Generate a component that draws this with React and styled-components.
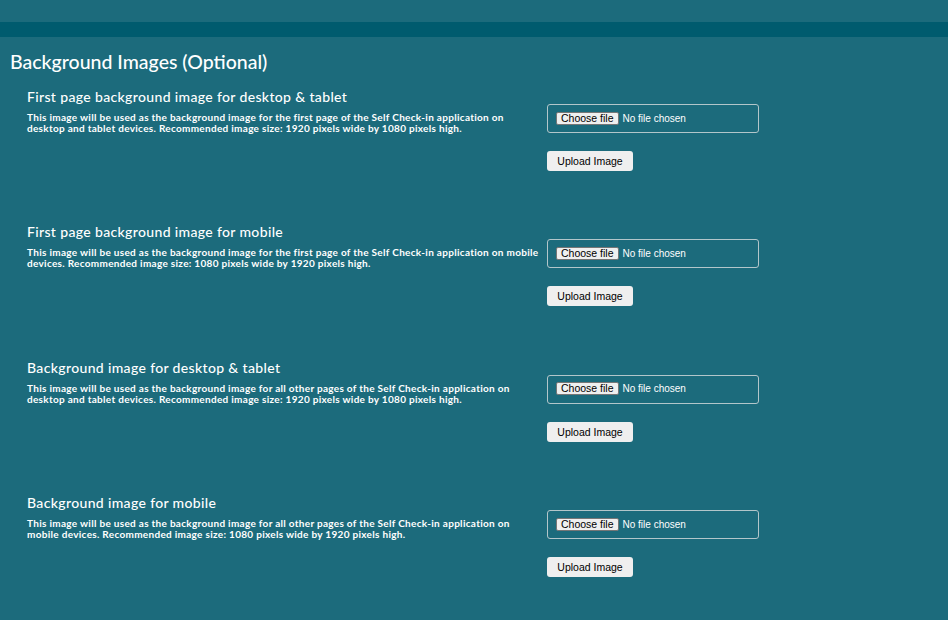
import React from "react";
import styled, { createGlobalStyle } from "styled-components";

const Global = createGlobalStyle`
  html, body { margin: 0; padding: 0; background: #1c6b7c; }
  body { font-family: Lato, "Open Sans", sans-serif; color: #ffffff; }
  * { box-sizing: border-box; }
`;

const Page = styled.div`
  width: 948px;
  min-height: 620px;
  background: #1c6b7c;
  padding-top: 22px;
`;

const Stripe = styled.div`
  height: 15px;
  background: #005b6e;
`;

const Heading = styled.h1`
  margin: 13px 0 0 10px;
  font-family: Lato, sans-serif;
  font-size: 19.5px;
  line-height: 24px;
  font-weight: 500;
  color: #ffffff;
`;

const List = styled.div`
  display: flex;
  flex-direction: column;
  padding: 14px 0 0 27px;
`;

const Section = styled.section`
  display: grid;
  grid-template-columns: 513px 212px;
  column-gap: 7px;
  height: 135.4px;
`;

const Left = styled.div`
  display: flex;
  flex-direction: column;
`;

const Title = styled.h2`
  margin: 0;
  font-family: Lato, sans-serif;
  font-size: 14px;
  line-height: 17px;
  font-weight: 500;
  letter-spacing: 0.35px;
  color: #ffffff;
`;

const Desc = styled.p`
  margin: 7px 0 0 0;
  font-family: Lato, sans-serif;
  font-size: 10px;
  line-height: 11px;
  font-weight: 700;
  letter-spacing: 0.3px;
  color: #ffffff;
`;

const Right = styled.div`
  display: flex;
  flex-direction: column;
  align-items: flex-start;
  padding-top: 16px;
`;

const FileBox = styled.div`
  display: flex;
  align-items: center;
  gap: 4px;
  width: 212px;
  height: 29px;
  border: 1px solid #b3c6ca;
  border-radius: 3px;
  padding: 0 0 1px 8px;
`;

const ChooseButton = styled.button`
  font-family: "Liberation Sans", Arial, sans-serif;
  font-size: 10.5px;
  color: #000000;
  background: #efefef;
  border: 1px solid #767676;
  border-radius: 2px;
  padding: 0 4px;
  height: 13px;
  line-height: 11px;
`;

const FileStatus = styled.span`
  font-family: "Liberation Sans", Arial, sans-serif;
  font-size: 10px;
  color: #ffffff;
`;

const UploadButton = styled.button`
  margin-top: 18px;
  width: 86px;
  height: 20px;
  background: #efefef;
  border: none;
  border-radius: 3px;
  font-family: "Liberation Sans", Arial, sans-serif;
  font-size: 10.5px;
  color: #000000;
  padding: 0;
`;

const sections = [
  {
    title: "First page background image for desktop & tablet",
    desc: "This image will be used as the background image for the first page of the Self Check-in application on desktop and tablet devices. Recommended image size: 1920 pixels wide by 1080 pixels high.",
  },
  {
    title: "First page background image for mobile",
    desc: "This image will be used as the background image for the first page of the Self Check-in application on mobile devices. Recommended image size: 1080 pixels wide by 1920 pixels high.",
  },
  {
    title: "Background image for desktop & tablet",
    desc: "This image will be used as the background image for all other pages of the Self Check-in application on desktop and tablet devices. Recommended image size: 1920 pixels wide by 1080 pixels high.",
  },
  {
    title: "Background image for mobile",
    desc: "This image will be used as the background image for all other pages of the Self Check-in application on mobile devices. Recommended image size: 1080 pixels wide by 1920 pixels high.",
  },
];

export default function App() {
  return (
    <Page>
      <Global />
      <Stripe />
      <Heading>Background Images (Optional)</Heading>
      <List>
        {sections.map((s) => (
          <Section key={s.title}>
            <Left>
              <Title>{s.title}</Title>
              <Desc>{s.desc}</Desc>
            </Left>
            <Right>
              <FileBox>
                <ChooseButton type="button">Choose file</ChooseButton>
                <FileStatus>No file chosen</FileStatus>
              </FileBox>
              <UploadButton type="button">Upload Image</UploadButton>
            </Right>
          </Section>
        ))}
      </List>
    </Page>
  );
}
